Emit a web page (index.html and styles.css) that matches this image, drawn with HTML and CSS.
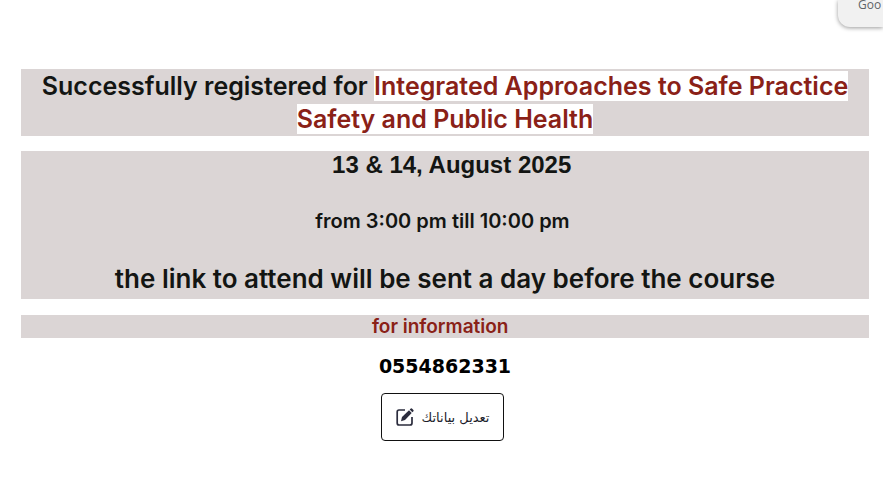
FILE: index.html
```html
<!DOCTYPE html>
<html lang="en">
<head>
<meta charset="utf-8">
<meta name="viewport" content="width=device-width, initial-scale=1">
<title>Registration confirmed</title>
<link rel="stylesheet" href="styles.css">
</head>
<body>
<div class="chip">Goo</div>
<main class="page">
  <h1 class="band title">Successfully registered for <span class="course">Integrated Approaches to Safe Practice Safety and Public Health</span></h1>
  <section class="band details">
    <p class="date">&nbsp;&nbsp;13 &amp; 14, August 2025</p>
    <p class="time">from 3:00 pm till 10:00 pm&nbsp;</p>
    <p class="notice">the link to attend will be sent a day before the course</p>
  </section>
  <h2 class="band info">for information&nbsp;&nbsp;</h2>
  <p class="phone">0554862331</p>
  <button class="edit" type="button">
    <svg class="icon" viewBox="0 0 18 18" aria-hidden="true">
      <path d="M9 2H3Q1.200 2 1.200 4V15Q1.200 17 3 17H14Q16 17 16 15V9" fill="none" stroke="#2b2c3d" stroke-width="1.700"/>
      <path d="M5 13.200L6 9L13 2.300L15.700 5L9 12Z" fill="#2b2c3d"/>
      <path d="M13.700 1.600L14.800.500Q15.500 0 16.200.700L17.400 1.900Q18 2.600 17.400 3.200L16.400 4.300Z" fill="#2b2c3d"/>
    </svg>
    <span lang="ar" dir="rtl">تعديل بياناتك</span>
  </button>
</main>
</body>
</html>
```
FILE: styles.css
```css
* {
  box-sizing: border-box;
}

body {
  margin: 0;
  background: #fff;
  color: #131513;
  font-family: "Liberation Sans", Arial, sans-serif;
  overflow-x: hidden;
}

.page {
  display: flex;
  flex-direction: column;
  align-items: center;
  padding: 69px 14px 56px 21px;
}

.page > * {
  margin: 0;
}

.band {
  align-self: stretch;
  background: #dbd5d5;
  text-align: center;
}

.title,
.time,
.notice {
  font-family: "Comic Sans MS", Inter, sans-serif;
  font-weight: 600;
}

.title {
  padding: 1px 16px 0;
  font-size: 25px;
  line-height: 33px;
}

.course {
  background: #fff;
  color: #8a2117;
}

.page > .details {
  margin-top: 15px;
}

.details p {
  margin: 0;
}

.date {
  font-size: 24px;
  font-weight: 700;
  line-height: 28px;
}

.details .time {
  margin: 28px 0;
  font-size: 20px;
  line-height: 28px;
}

.notice {
  padding-bottom: 4px;
  font-size: 26px;
  line-height: 32px;
}

.page > .info {
  margin-top: 16px;
  color: #8a2117;
  font-family: Inter, sans-serif;
  font-size: 19px;
  font-weight: 600;
  line-height: 23px;
}

.page > .phone {
  margin-top: 16px;
  color: #000;
  font-family: "DejaVu Sans", sans-serif;
  font-size: 19px;
  font-weight: 700;
  line-height: 24px;
}

.edit {
  display: flex;
  align-items: center;
  gap: 8px;
  height: 48px;
  margin: 15px 5px 0 0;
  padding: 0 14px;
  border: 1px solid #111;
  border-radius: 4px;
  background: #fff;
  color: #1d1e2c;
  font-family: "DejaVu Sans", sans-serif;
  font-size: 13px;
}

.icon {
  width: 18px;
  height: 18px;
}

.chip {
  position: absolute;
  top: 0;
  right: 0;
  width: 45px;
  height: 27px;
  padding-left: 20px;
  border-bottom-left-radius: 12px;
  background: #f1f1f1;
  box-shadow: 0 1px 4px rgba(0, 0, 0, 0.4);
  color: #5f6368;
  font-family: "Open Sans", sans-serif;
  font-size: 12px;
  line-height: 10px;
}
```
